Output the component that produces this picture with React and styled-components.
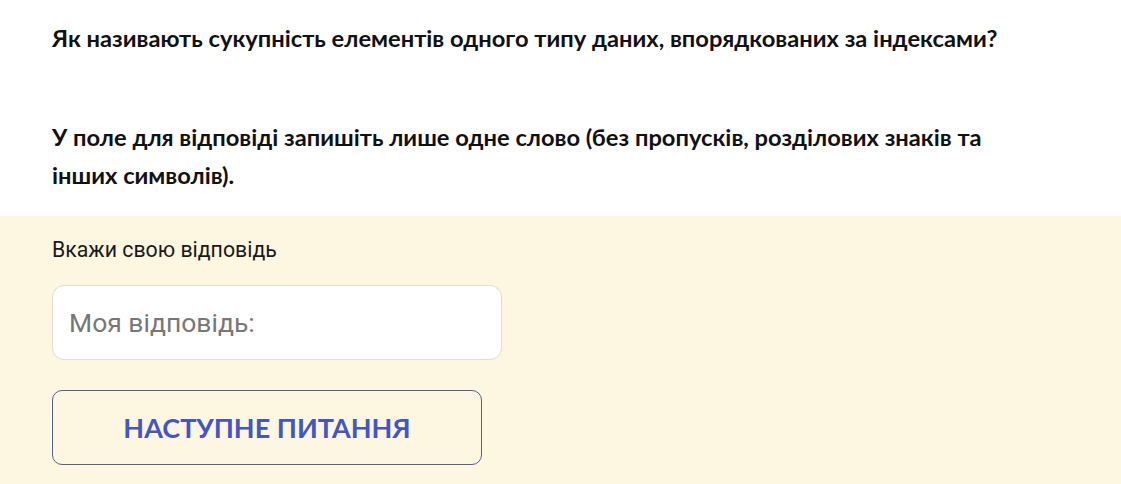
import styled, { createGlobalStyle } from "styled-components";

const Global = createGlobalStyle`
  body {
    margin: 0;
    background: #ffffff;
  }
`;

const Page = styled.div`
  width: 1121px;
  height: 484px;
  overflow: hidden;
  display: flex;
  flex-direction: column;
`;

const Question = styled.section`
  padding: 19px 52px 22px;
  background: #ffffff;
  color: #111111;
  font-family: Lato, "Open Sans", sans-serif;
  font-weight: 700;
  font-size: 23.7px;
  line-height: 38px;

  p {
    margin: 0;
  }
  p + p {
    margin-top: 61px;
  }
`;

const AnswerArea = styled.section`
  flex: 1;
  background: #fdf6e0;
  padding: 24px 52px 0;
  display: flex;
  flex-direction: column;
  align-items: flex-start;
`;

const Label = styled.div`
  font-family: Roboto, "Noto Sans", sans-serif;
  font-size: 21.3px;
  color: #1a1a1a;
  line-height: 20px;
  margin-bottom: 25px;
`;

const Input = styled.input`
  box-sizing: border-box;
  width: 450px;
  height: 75px;
  border: 1px solid #e2ddd0;
  border-radius: 12px;
  background: #ffffff;
  padding: 0 16px;
  font-family: Roboto, "Noto Sans", sans-serif;
  font-size: 26.5px;
  color: #333;
  outline: none;

  &::placeholder {
    color: #777777;
  }
`;

const NextButton = styled.button`
  box-sizing: border-box;
  margin-top: 30px;
  width: 430px;
  height: 75px;
  border: 1px solid #5a5f8a;
  border-radius: 10px;
  background: transparent;
  color: #4356c2;
  font-family: Lato, "Open Sans", sans-serif;
  font-weight: 700;
  font-size: 27px;
  cursor: pointer;
`;

export default function App() {
  return (
    <Page>
      <Global />
      <Question>
        <p>Як називають сукупність елементів одного типу даних, впорядкованих за індексами?</p>
        <p>
          У поле для відповіді запишіть лише одне слово (без пропусків, розділових знаків та
          <br />
          інших символів).
        </p>
      </Question>
      <AnswerArea>
        <Label>Вкажи свою відповідь</Label>
        <Input placeholder="Моя відповідь:" />
        <NextButton>НАСТУПНЕ ПИТАННЯ</NextButton>
      </AnswerArea>
    </Page>
  );
}
